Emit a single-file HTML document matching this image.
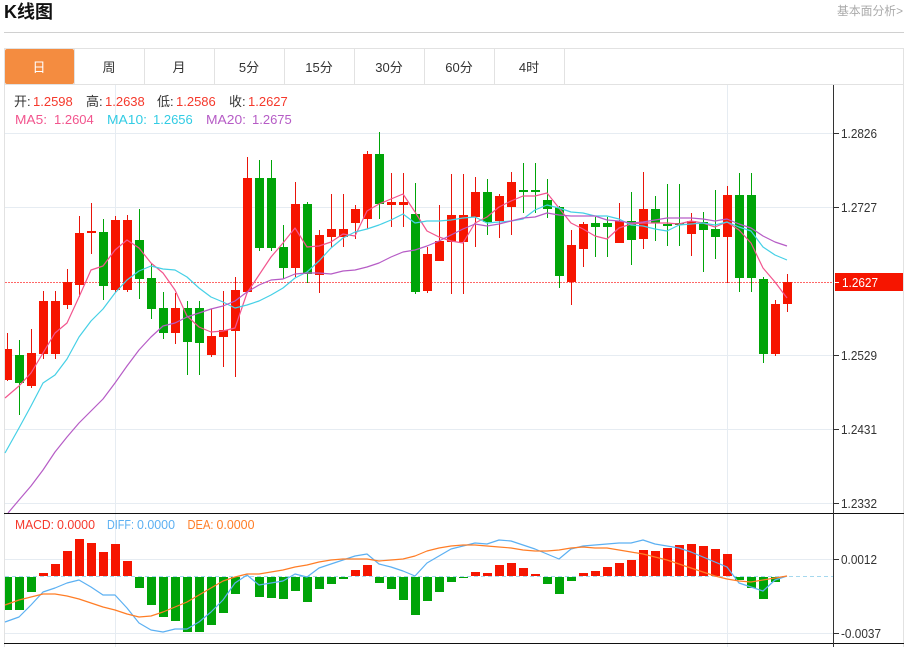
<!DOCTYPE html>
<html lang="zh"><head><meta charset="utf-8"><title>K线图</title>
<style>
html,body{margin:0;padding:0;background:#fff;width:911px;height:647px;overflow:hidden}
svg{display:block;font-family:"Liberation Sans","Noto Sans CJK SC",sans-serif}
.cr{shape-rendering:crispEdges}
.l{fill:none;stroke-width:1.2;stroke-linejoin:round}
</style></head><body>
<svg width="911" height="647" viewBox="0 0 911 647" xmlns="http://www.w3.org/2000/svg">
<text x="4" y="18" font-size="18" font-weight="700" fill="#111">K线图</text>
<text x="837" y="15" font-size="12" fill="#aaa" textLength="66" lengthAdjust="spacingAndGlyphs">基本面分析&gt;</text>
<g class="cr" fill="none">
<path d="M4 32.500H904" stroke="#d0d0d0"/>
<path d="M4 48.500H904M4.500 48V647M903.500 48V647M4 84.500H904" stroke="#e2e2e2"/>
<path d="M74.500 49V84M144.500 49V84M214.500 49V84M284.500 49V84M354.500 49V84M424.500 49V84M494.500 49V84M564.500 49V84" stroke="#e2e2e2"/>
</g>
<rect x="5" y="49" width="69" height="35" rx="2" fill="#f48c40"/>
<g font-size="13" text-anchor="middle" fill="#333">
<text x="39" y="72" fill="#fff">日</text>
<text x="109" y="72">周</text>
<text x="179" y="72">月</text>
<text x="249" y="72">5分</text>
<text x="319" y="72">15分</text>
<text x="389" y="72">30分</text>
<text x="459" y="72">60分</text>
<text x="529" y="72">4时</text>
</g>
<g class="cr" fill="none">
<path d="M5 133.500H833M5 207.500H833M5 355.500H833M5 429.500H833M5 503.500H833M5 559.500H833M5 633.500H833" stroke="#e6ecf2"/>
<path d="M115.500 85V647M727.500 85V647" stroke="#e6ecf2"/>
<path d="M5 282.500H833" stroke="#f66" stroke-dasharray="2 1"/>
<path d="M5 576.500H833" stroke="#a5d8ee" stroke-dasharray="4 3"/>
</g>
<!-- candles -->
<g class="cr" fill="none">
<path stroke="#e8140a" d="M7.500 333V381M31.500 329V388M43.500 291V359M55.500 291V359M67.500 269V309M79.500 216V297M91.500 203V254M115.500 216V292M127.500 215V292M175.500 293V344M211.500 309V357M223.500 291V367M235.500 277V377M247.500 157V292M295.500 182V277M319.500 230V293M331.500 194V247M343.500 194V247M355.500 205V239M367.500 151V229M391.500 173V227M403.500 173V227M427.500 247V293M439.500 205V261M451.500 174V294M463.500 174V294M475.500 177V247M499.500 194V238M511.500 172V235M571.500 230V305M583.500 222V267M619.500 203V243M643.500 172V249M691.500 213V256M727.500 186V283M775.500 300V356M787.500 274V312"/>
<path stroke="#00a408" d="M19.500 340V415M103.500 219V300M139.500 209V299M151.500 264V319M163.500 292V339M187.500 301V375M199.500 301V375M259.500 160V251M271.500 160V251M283.500 225V279M307.500 202V283M379.500 132V219M415.500 183V294M487.500 179V235M523.500 163V213M535.500 163V213M547.500 179V218M559.500 206V288M595.500 217V257M607.500 217V257M631.500 192V265M655.500 196V241M667.500 184V246M679.500 184V246M703.500 212V272M715.500 190V259M739.500 173V292M751.500 173V292M763.500 277V363"/>
</g>
<path class="cr" fill="#f61500" d="M5 349h7V380h-7zM27 353h9V386h-9zM39 301h9V354h-9zM51 301h9V354h-9zM63 282h9V305h-9zM75 233h9V285h-9zM87 231h9V233h-9zM111 220h9V290h-9zM123 220h9V290h-9zM171 308h9V333h-9zM207 336h9V355h-9zM219 330h9V337h-9zM231 290h9V331h-9zM243 178h9V292h-9zM291 204h9V268h-9zM315 235h9V275h-9zM327 229h9V237h-9zM339 229h9V237h-9zM351 209h9V223h-9zM363 154h9V219h-9zM387 202h9V205h-9zM399 202h9V205h-9zM423 254h9V291h-9zM435 241h9V261h-9zM447 215h9V242h-9zM459 215h9V242h-9zM471 192h9V217h-9zM495 196h9V221h-9zM507 182h9V207h-9zM567 245h9V282h-9zM579 224h9V249h-9zM615 221h9V243h-9zM639 209h9V239h-9zM687 221h9V234h-9zM723 195h9V237h-9zM771 304h9V354h-9zM783 282h9V304h-9z"/>
<path class="cr" fill="#00a408" d="M15 355h9V383h-9zM99 232h9V286h-9zM135 240h9V279h-9zM147 278h9V309h-9zM159 308h9V333h-9zM183 308h9V342h-9zM195 308h9V343h-9zM255 178h9V248h-9zM267 178h9V248h-9zM279 247h9V268h-9zM303 204h9V274h-9zM375 154h9V204h-9zM411 214h9V292h-9zM483 192h9V222h-9zM519 190h9V192h-9zM531 190h9V192h-9zM543 200h9V209h-9zM555 207h9V276h-9zM591 223h9V227h-9zM603 223h9V227h-9zM627 221h9V240h-9zM651 209h9V223h-9zM663 224h9V226h-9zM675 223h9V225h-9zM699 222h9V230h-9zM711 229h9V237h-9zM735 195h9V278h-9zM747 195h9V278h-9zM759 279h9V354h-9z"/>
<!-- MA -->
<polyline class="l" stroke="#f2558e" points="5,398 19,386 31,373 43,353 55,333 67,323 79,297 91,270 103,266 115,250 127,240 139,248 151,263 163,273 175,290 187,316 199,327 211,332 223,331 235,328 247,293 259,275 271,257 283,243 295,228 307,247 319,246 331,242 343,234 355,236 367,211 379,204 391,199 403,194 415,212 427,231 439,237 451,241 463,243 475,223 487,217 499,207 511,201 523,196 535,196 547,193 559,208 571,223 583,229 595,236 607,239 619,228 631,224 643,223 655,223 667,223 679,224 691,221 703,223 715,227 727,222 739,230 751,243 763,268 775,282 787,298"/>
<polyline class="l" stroke="#45d0e6" points="5,453 19,428 31,406 43,383 55,375 67,359 79,337 91,321 103,309 115,293 127,280 139,271 151,266 163,269 175,270 187,277 199,288 211,297 223,302 235,308 247,305 259,301 271,295 283,288 295,278 307,272 319,261 331,248 343,238 355,232 367,229 379,225 391,220 403,214 415,223 427,221 439,221 451,220 463,218 475,217 487,223 499,222 511,221 523,219 535,210 547,205 559,208 571,212 583,213 595,216 607,216 619,219 631,225 643,226 655,229 667,231 679,225 691,224 703,223 715,225 727,222 739,227 751,231 763,247 775,255 787,260"/>
<polyline class="l" stroke="#b65cc6" points="8,513 19,500 31,486 43,470 55,452 67,437 79,423 91,411 103,399 115,383 127,366 139,350 151,337 163,326 175,323 187,317 199,313 211,309 223,306 235,301 247,292 259,285 271,280 283,279 295,274 307,273 319,273 331,274 343,271 355,270 367,267 379,263 391,257 403,252 415,250 427,246 439,241 451,235 463,229 475,224 487,226 499,224 511,221 523,218 535,217 547,213 559,215 571,216 583,216 595,216 607,220 619,221 631,223 643,222 655,220 667,218 679,218 691,218 703,219 715,221 727,219 739,224 751,228 763,236 775,242 787,246"/>
<!-- MACD bars -->
<path class="cr" fill="#f61500" d="M39 573h9V576h-9zM51 564h9V576h-9zM63 551h9V576h-9zM75 539h9V576h-9zM87 543h9V576h-9zM99 552h9V576h-9zM111 544h9V576h-9zM123 561h9V576h-9zM351 570h9V576h-9zM363 565h9V576h-9zM471 572h9V576h-9zM483 573h9V576h-9zM495 565h9V576h-9zM507 563h9V576h-9zM519 568h9V576h-9zM531 574h9V576h-9zM579 573h9V576h-9zM591 571h9V576h-9zM603 567h9V576h-9zM615 563h9V576h-9zM627 560h9V576h-9zM639 550h9V576h-9zM651 551h9V576h-9zM663 548h9V576h-9zM675 545h9V576h-9zM687 544h9V576h-9zM699 546h9V576h-9zM711 549h9V576h-9zM723 554h9V576h-9z"/>
<path class="cr" fill="#00a408" d="M5 577h7V610h-7zM15 577h9V610h-9zM27 577h9V592h-9zM135 577h9V588h-9zM147 577h9V605h-9zM159 577h9V617h-9zM171 577h9V621h-9zM183 577h9V632h-9zM195 577h9V632h-9zM207 577h9V625h-9zM219 577h9V613h-9zM231 577h9V594h-9zM255 577h9V597h-9zM267 577h9V598h-9zM279 577h9V599h-9zM291 577h9V591h-9zM303 577h9V602h-9zM315 577h9V589h-9zM327 577h9V584h-9zM339 577h9V579h-9zM375 577h9V583h-9zM387 577h9V589h-9zM399 577h9V600h-9zM411 577h9V615h-9zM423 577h9V601h-9zM435 577h9V592h-9zM447 577h9V582h-9zM459 577h9V578h-9zM543 577h9V584h-9zM555 577h9V594h-9zM567 577h9V581h-9zM735 577h9V580h-9zM747 577h9V588h-9zM759 577h9V599h-9zM771 577h9V582h-9z"/>
<polyline class="l" stroke="#5cb0f2" points="5,622 19,617 31,605 43,592 55,588 67,583 79,580 91,587 103,595 115,595 127,608 139,623 151,630 163,632 175,629 187,629 199,622 211,612 223,600 235,583 247,575 259,585 271,583 283,581 295,574 307,577 319,568 331,564 343,560 355,556 367,554 379,564 391,567 403,571 415,576 427,563 439,556 451,549 463,546 475,543 487,544 499,540 511,541 523,545 535,549 547,554 559,559 571,549 583,546 595,545 607,544 619,543 631,543 643,540 655,544 667,546 679,548 691,552 703,557 715,562 727,567 739,583 751,587 763,591 775,580 787,576"/>
<polyline class="l" stroke="#ff7d26" points="5,605 19,600 31,597 43,594 55,594 67,596 79,599 91,603 103,607 115,610 127,614 139,617 151,616 163,612 175,607 187,602 199,595 211,588 223,581 235,577 247,574 259,574 271,572 283,570 295,567 307,565 319,562 331,560 343,559 355,559 367,559 379,561 391,560 403,559 415,556 427,551 439,548 451,546 463,545 475,545 487,546 499,547 511,548 523,550 535,551 547,551 559,550 571,548 583,547 595,548 607,548 619,550 631,552 643,554 655,557 667,560 679,564 691,568 703,572 715,576 727,579 739,581 751,582 763,580 775,578 787,576"/>
<!-- axes -->
<g class="cr" fill="none">
<path d="M4 513.500H904M4 643.500H904" stroke="#111"/>
<path d="M833.500 85V647" stroke="#333"/>
<path d="M834 133.500h5M834 207.500h5M834 282.500h5M834 355.500h5M834 429.500h5M834 503.500h5M834 559.500h5M834 633.500h5" stroke="#333"/>
</g>
<rect x="835" y="273" width="68" height="18" fill="#f61500"/>
<path class="cr" d="M834 282.500h5" stroke="#fff" fill="none"/>
<g font-size="13" fill="#333" lengthAdjust="spacingAndGlyphs">
<text x="841" y="138" textLength="36" lengthAdjust="spacingAndGlyphs">1.2826</text>
<text x="841" y="212" textLength="36" lengthAdjust="spacingAndGlyphs">1.2727</text>
<text x="842" y="287" fill="#fff" textLength="36" lengthAdjust="spacingAndGlyphs">1.2627</text>
<text x="841" y="360" textLength="36" lengthAdjust="spacingAndGlyphs">1.2529</text>
<text x="841" y="434" textLength="36" lengthAdjust="spacingAndGlyphs">1.2431</text>
<text x="841" y="508" textLength="36" lengthAdjust="spacingAndGlyphs">1.2332</text>
<text x="841" y="564" textLength="36" lengthAdjust="spacingAndGlyphs">0.0012</text>
<text x="841" y="638" textLength="40" lengthAdjust="spacingAndGlyphs">-0.0037</text>
</g>
<!-- info text -->
<g font-size="13">
<text x="14" y="106" fill="#333">开:</text><text x="33" y="106" fill="#f5392c">1.2598</text>
<text x="86" y="106" fill="#333">高:</text><text x="105" y="106" fill="#f5392c">1.2638</text>
<text x="157" y="106" fill="#333">低:</text><text x="176" y="106" fill="#f5392c">1.2586</text>
<text x="229" y="106" fill="#333">收:</text><text x="248" y="106" fill="#f5392c">1.2627</text>
<text x="15" y="124" fill="#f2558e" textLength="32" lengthAdjust="spacingAndGlyphs">MA5:</text><text x="54" y="124" fill="#f2558e">1.2604</text>
<text x="107" y="124" fill="#33cce4" textLength="40" lengthAdjust="spacingAndGlyphs">MA10:</text><text x="153" y="124" fill="#33cce4">1.2656</text>
<text x="206" y="124" fill="#b65cc6" textLength="40" lengthAdjust="spacingAndGlyphs">MA20:</text><text x="252" y="124" fill="#b65cc6">1.2675</text>
<text x="15" y="529" fill="#f5392c" textLength="39" lengthAdjust="spacingAndGlyphs">MACD:</text><text x="57" y="529" fill="#f5392c" textLength="38" lengthAdjust="spacingAndGlyphs">0.0000</text>
<text x="107" y="529" fill="#5cb0f2" textLength="27" lengthAdjust="spacingAndGlyphs">DIFF:</text><text x="137" y="529" fill="#5cb0f2" textLength="38" lengthAdjust="spacingAndGlyphs">0.0000</text>
<text x="187.500" y="529" fill="#ff7d26" textLength="26" lengthAdjust="spacingAndGlyphs">DEA:</text><text x="216.500" y="529" fill="#ff7d26" textLength="38" lengthAdjust="spacingAndGlyphs">0.0000</text>
</g>
</svg>
</body></html>
